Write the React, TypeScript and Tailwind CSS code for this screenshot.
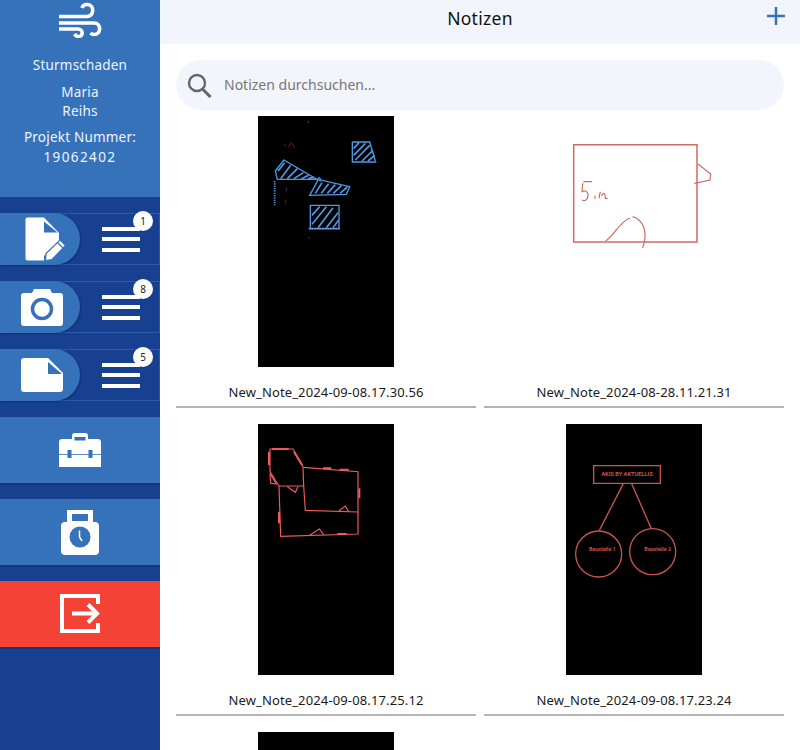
const font = { fontFamily: '"Noto Sans", "Liberation Sans", sans-serif' };

function Badge({ n }: { n: string }) {
  return (
    <div className="absolute right-[6px] top-[-3px] flex h-5 w-5 items-center justify-center rounded-full bg-white text-[10px] leading-none text-[#222]">
      {n}
    </div>
  );
}

function Burger() {
  return (
    <div className="flex flex-1 flex-col items-center justify-center gap-[6.5px] pl-[2px]">
      <div className="h-1 w-[38px] bg-white" />
      <div className="h-1 w-[38px] bg-white" />
      <div className="h-1 w-[38px] bg-white" />
    </div>
  );
}

function Row({ n, pill, children }: { n: string; pill: string; children: React.ReactNode }) {
  return (
    <div className="relative flex h-[52px] border-y border-r border-[#2a5aa8] bg-[#174091]">
      <div className={`flex h-[52px] w-20 -mt-px items-center justify-center rounded-r-[26px] bg-[#3672b9] shadow-[1px_1px_2px_rgba(0,0,0,0.25)] ${pill}`}>
        {children}
      </div>
      <Burger />
      <Badge n={n} />
    </div>
  );
}

function BigButton({ color, children }: { color: string; children: React.ReactNode }) {
  return <div className={`flex h-[68px] items-center justify-center border-b-2 border-[#123678] ${color}`}>{children}</div>;
}

function Wind() {
  return (
    <svg width="44" height="36" viewBox="0 0 44 36" fill="none" stroke="white" strokeWidth="3.6">
      <path d="M1 14.5H29C36 14.5 37 3 29.5 2.5C26.5 2.3 24.5 4 24 6" />
      <path d="M1 21H36C43.5 21 43.5 32.5 36 32.500C34.500 32.500 33.500 32 32.500 31" />
      <path d="M1 27H20C25.500 27 25.500 34.500 20.500 34.500C18.500 34.500 17.500 33.500 16.500 32" />
    </svg>
  );
}

function DocPen() {
  return (
    <svg width="41" height="44" viewBox="0 0 41 44">
      <path d="M2.500 0.500H19L34 16V24L19 39V43.500H2.500C1 43.500 0.500 42.500 0.500 41V3C0.500 1.500 1 0.500 2.500 0.500Z" fill="white" />
      <path d="M19 4.500L32.500 15.500H19Z" fill="#3672b9" />
      <path d="M20.500 43.500L21 36.500L35 23L40.500 28.500L27 42.500Z" fill="white" stroke="#3672b9" strokeWidth="1.200" />
      <path d="M32.500 25.500L38 31" stroke="#3672b9" strokeWidth="1.200" />
    </svg>
  );
}

function Camera() {
  return (
    <svg width="42" height="38" viewBox="0 0 42 38">
      <path d="M3 5H11L13 1H29L31 5H39C41 5 42 6 42 8V35C42 37 41 38 39 38H3C1 38 0 37 0 35V8C0 6 1 5 3 5Z" fill="white" />
      <circle cx="21" cy="21" r="9.500" fill="none" stroke="#3672b9" strokeWidth="3.500" />
    </svg>
  );
}

function FileIcon() {
  return (
    <svg width="42" height="34" viewBox="0 0 42 34">
      <path d="M3 0H27L42 15V31C42 33 41 34 39 34H3C1 34 0 33 0 31V3C0 1 1 0 3 0Z" fill="white" />
      <path d="M27 4L41 16H27Z" fill="#3672b9" />
    </svg>
  );
}

function Case() {
  return (
    <svg width="44" height="36" viewBox="0 0 44 36">
      <path d="M14 7V4C14 2 15 1 17 1H27C29 1 30 2 30 4V7H40C42 7 43 8 43 10V35H1V10C1 8 2 7 4 7Z" fill="white" />
      <rect x="16.500" y="5" width="11" height="3.500" fill="#3672b9" />
      <path d="M1 22.500H43" stroke="#3672b9" strokeWidth="0.800" />
      <rect x="9.500" y="18" width="4" height="8" fill="#3672b9" />
      <rect x="30.500" y="18" width="4" height="8" fill="#3672b9" />
    </svg>
  );
}

function Weight() {
  return (
    <svg width="38" height="46" viewBox="0 0 38 46">
      <path d="M6 13V1H32V13H34C36.500 13 38 14.500 38 17V42C38 44.500 36.500 46 34 46H4C1.500 46 0 44.500 0 42V17C0 14.500 1.500 13 4 13Z" fill="white" />
      <rect x="11" y="5" width="16" height="7" fill="#3672b9" />
      <circle cx="19" cy="28" r="10.500" fill="#3672b9" />
      <path d="M18.500 21.500V28L21 32" fill="none" stroke="white" strokeWidth="1.500" />
    </svg>
  );
}

function Exit() {
  return (
    <svg width="40" height="40" viewBox="0 0 40 40" fill="none" stroke="white">
      <path d="M38 10V2H2V37H38V29" strokeWidth="4" />
      <path d="M12 19.500H36M28 10.500L37 19.500L28 28.500" strokeWidth="4" />
    </svg>
  );
}

function Hatch({ lines, color }: { lines: number[][]; color: string }) {
  return (
    <g stroke={color} strokeWidth="5">
      {lines.map((l, i) => (
        <path key={i} d={`M${l[0]} ${l[1]}L${l[2]} ${l[3]}`} />
      ))}
    </g>
  );
}

function Sketch1() {
  const blue = "#4f9ae6";
  return (
    <svg className="h-[251px] w-[136px] bg-black" viewBox="0 0 408 753" fill="none">
      <circle cx="151" cy="18" r="1.500" fill="#bbb" />
      <g stroke={blue} strokeWidth="4">
        <path d="M283 78V138H355M283 78H335L352 135" />
        <path d="M78 132L52 165L58 190H180L275 212L265 235L155 238L180 192L78 132Z" />
        <path d="M157 268H243V338H157Z" />
        <path d="M50 195V268" strokeDasharray="4 3" strokeWidth="5" />
      </g>
      <Hatch
        color={blue}
        lines={[
          [287, 98, 303, 80], [287, 118, 322, 82], [292, 132, 335, 88], [312, 135, 345, 103], [330, 135, 350, 118],
          [60, 165, 80, 140], [68, 188, 98, 148], [88, 188, 118, 158], [108, 188, 136, 170], [130, 188, 152, 178], [150, 188, 168, 184],
          [172, 232, 192, 200], [190, 232, 212, 203], [208, 232, 232, 206], [226, 232, 250, 209], [246, 232, 268, 213],
          [162, 298, 185, 272], [162, 325, 205, 272], [180, 335, 225, 275], [205, 335, 240, 290], [225, 335, 242, 312],
        ]}
      />
      <path d="M180 185L190 195" stroke="#2b7fe0" strokeWidth="9" />
      <path d="M152 338H245" stroke="#7a9cd0" strokeWidth="5" strokeDasharray="5 3" />
      <g stroke="#5c1f24" strokeWidth="3">
        <path d="M90 95L100 80L110 95M78 88H84" />
        <path d="M85 215V225M82 250V262M150 365H156" />
      </g>
    </svg>
  );
}

function Sketch2() {
  const red = "#cf6b66";
  return (
    <svg className="h-[251px] w-[170px] -ml-[6px] -mr-[28px] bg-white" viewBox="0 -42 510 753" fill="none" stroke={red}>
      <path d="M41 44H411V336H41Z" strokeWidth="4.500" />
      <path d="M414 102L452 132L450 150L403 160" strokeWidth="3.500" />
      <path d="M70 155H96M68 160L66 185C80 178 88 190 82 205C78 213 72 213 66 210" strokeWidth="3.500" />
      <path d="M105 206V197M118 205C118 195 120 188 122 186M124 197C132 185 136 190 136 205H143" strokeWidth="3.500" />
      <path d="M137 333C160 318 180 275 210 264" strokeWidth="3.500" />
      <path d="M218 260C250 270 265 305 248 354" strokeWidth="3.500" />
    </svg>
  );
}

function Sketch3() {
  const red = "#ee5c5a";
  return (
    <svg className="h-[251px] w-[136px] bg-black" viewBox="0 -18 408 753" fill="none" stroke={red} strokeWidth="3.500">
      <path d="M36 57H105L135 110L137 168H63L36 125Z" />
      <path d="M137 112L300 125V246L142 241L137 168" />
      <path d="M63 168L68 319L300 312V246" />
      <path d="M36 130L38 160L55 162ZM88 170L112 187L120 170M242 243L262 228L272 245M155 316L184 297L197 314" />
      <g strokeWidth="6">
        <path d="M42 57H92M108 65L132 105M33 65L33 105M195 115H220M245 119H272M304 175V205M63 245V280M238 312H266" />
      </g>
    </svg>
  );
}

function Sketch4() {
  const red = "#c9544f";
  return (
    <svg className="h-[251px] w-[136px] bg-black" viewBox="0 -93 408 753" fill="none" stroke={red} strokeWidth="4">
      <path d="M83 32H283V85H83Z" />
      <path d="M172 86L100 226M197 86L256 221" />
      <circle cx="98" cy="297" r="69" />
      <circle cx="260" cy="290" r="69" />
      <g fill={red} stroke="none" fontFamily='"Roboto", sans-serif' fontWeight="700">
        <text x="183" y="64" fontSize="17" textAnchor="middle">AKIS BY AKTUELLIS</text>
        <text x="109" y="289" fontSize="16" textAnchor="middle">Baustelle 1</text>
        <text x="275" y="289" fontSize="16" textAnchor="middle">Baustelle 2</text>
      </g>
    </svg>
  );
}

function Note({ name, children }: { name: string; children: React.ReactNode }) {
  return (
    <div className="flex flex-col items-center">
      <div className="flex h-[251px] w-full justify-center">{children}</div>
      <div className="flex h-[41px] w-full items-center justify-center border-b-2 border-[#b5b5b5] pt-[13px] text-[13px] tracking-[0.13px] text-[#1a1a1a]">
        {name}
      </div>
    </div>
  );
}

export default function App() {
  return (
    <div className="flex h-[750px] w-[800px] overflow-hidden bg-white" style={font}>
      <aside className="flex h-full w-40 shrink-0 flex-col bg-[#174091]">
        <div className="flex h-[197px] flex-col items-center bg-[#3672b9] pt-[2px] text-center text-[13.500px] tracking-[0.2px] text-[#eef4fc]">
          <Wind />
          <div className="mt-[17px] leading-[20px]">Sturmschaden</div>
          <div className="mt-[8px] leading-[19px]">Maria<br />Reihs</div>
          <div className="mt-[6px] leading-[20px]">Projekt Nummer:<br /><span className="tracking-[1.4px]">19062402</span></div>
        </div>
        <div className="flex flex-col gap-4 pt-4">
          <Row n="1" pill="pl-[11px]"><DocPen /></Row>
          <Row n="8" pill="pl-1"><Camera /></Row>
          <Row n="5" pill="pl-1"><FileIcon /></Row>
        </div>
        <div className="mt-[16px] flex flex-col gap-[14px]">
          <BigButton color="bg-[#3672b9]"><Case /></BigButton>
          <BigButton color="bg-[#3672b9]"><Weight /></BigButton>
          <BigButton color="bg-[#f44336]"><Exit /></BigButton>
        </div>
      </aside>
      <main className="flex min-w-0 flex-1 flex-col">
        <header className="relative flex h-11 shrink-0 items-center justify-center bg-[#f2f5fb] pb-[7px] text-[17.500px] tracking-[0.3px] text-[#111]">
          Notizen
          <svg className="absolute right-[15px] top-[7px]" width="18" height="18" viewBox="0 0 18 18" stroke="#3672b9" strokeWidth="2.500">
            <path d="M9 0V18M0 9H18" />
          </svg>
        </header>
        <div className="px-4 pt-4">
          <div className="flex h-[50px] items-center gap-[12px] rounded-[25px] bg-[#f2f5fb] pl-[11px] text-sm text-[#777]">
            <svg width="25" height="25" viewBox="0 0 25 25" fill="none" stroke="#666" strokeWidth="2.400">
              <circle cx="10" cy="10" r="8" />
              <path d="M15.500 16L23.500 24" strokeWidth="3" />
            </svg>
            Notizen durchsuchen...
          </div>
          <div className="mt-[6px] grid grid-cols-2 gap-x-2 gap-y-4">
            <Note name="New_Note_2024-09-08.17.30.56"><Sketch1 /></Note>
            <Note name="New_Note_2024-08-28.11.21.31"><Sketch2 /></Note>
            <Note name="New_Note_2024-09-08.17.25.12"><Sketch3 /></Note>
            <Note name="New_Note_2024-09-08.17.23.24"><Sketch4 /></Note>
            <div className="flex justify-center">
              <div className="h-[251px] w-[136px] bg-black" />
            </div>
          </div>
        </div>
      </main>
    </div>
  );
}
